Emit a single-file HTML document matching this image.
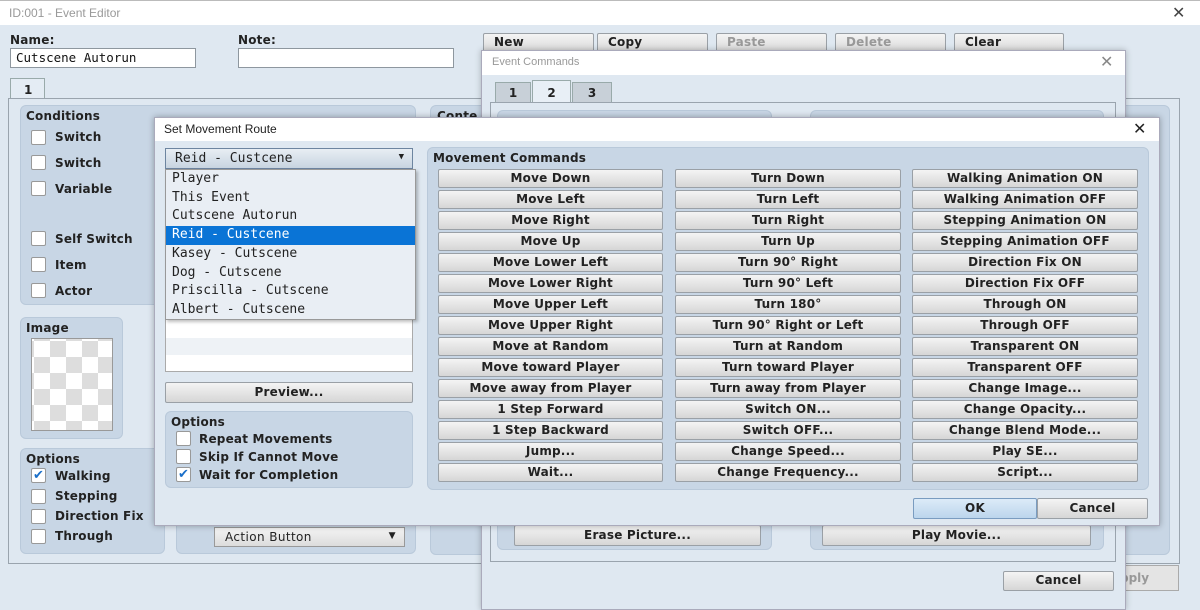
<!DOCTYPE html>
<html><head><meta charset="utf-8"><style>
*{box-sizing:border-box;margin:0;padding:0}
body{width:1200px;height:600px;overflow:hidden;position:relative;background:#dfe8f1;font-family:"DejaVu Sans","Liberation Sans",sans-serif;font-weight:bold;font-size:12px;color:#222}
.a{position:absolute}
.tb{background:#fff}
.ttl{font-family:"Liberation Sans",sans-serif;font-weight:normal;color:#999;font-size:12px}
.btn{position:absolute;background:linear-gradient(#f4f4f4,#d6d6d6);border:1px solid #9aa0a6;border-radius:2px;text-align:center;font-size:12px;line-height:17px;color:#222;letter-spacing:.2px}
.panel{position:absolute;background:#c8d6e5;border-radius:6px;border:1px solid #b9c9da}
.inp{position:absolute;background:#fff;border:1px solid #8e979f}
.cb{position:absolute;width:15px;height:15px;background:#fff;border:1px solid #999;border-radius:2px}
.lbl{position:absolute;font-size:12px;letter-spacing:.2px}
.mono{font-family:"DejaVu Sans Mono","Liberation Mono",monospace;font-weight:normal;font-size:12.5px}
.x{position:absolute;font-family:"Liberation Sans",sans-serif;font-weight:normal;font-size:16px;color:#444}
</style></head><body>
<!-- main window -->
<div class="a tb" style="left:0;top:0;width:1200px;height:25px;border-top:1px solid #bbb"></div>
<div class="a ttl" style="left:9px;top:6px">ID:001 - Event Editor</div>
<div class="x" style="left:1172px;top:3px">✕</div>
<div class="lbl" style="left:10px;top:33px">Name:</div>
<div class="lbl" style="left:238px;top:33px">Note:</div>
<div class="inp mono" style="left:10px;top:48px;width:186px;height:20px;padding:1px 5px;color:#111">Cutscene Autorun</div>
<div class="inp" style="left:238px;top:48px;width:216px;height:20px"></div>
<div class="btn" style="left:483px;top:33px;width:111px;height:22px;text-align:left;padding-left:10px">New</div>
<div class="btn" style="left:597px;top:33px;width:111px;height:22px;text-align:left;padding-left:10px">Copy</div>
<div class="btn" style="left:716px;top:33px;width:111px;height:22px;text-align:left;padding-left:10px;color:#999">Paste</div>
<div class="btn" style="left:835px;top:33px;width:111px;height:22px;text-align:left;padding-left:10px;color:#999">Delete</div>
<div class="btn" style="left:954px;top:33px;width:110px;height:22px;text-align:left;padding-left:10px">Clear</div>
<div class="a" style="left:10px;top:78px;width:35px;height:21px;background:#e4ecf4;border:1px solid #9aa;border-bottom:none;padding:4px 13px">1</div>
<div class="a" style="left:8px;top:98px;width:1172px;height:466px;border:1px solid #9aa4ae"></div>
<div class="panel" style="left:20px;top:105px;width:396px;height:200px"></div>
<div class="lbl" style="left:26px;top:109px">Conditions</div>
<div class="cb" style="left:31px;top:130px"></div><div class="lbl" style="left:55px;top:130px">Switch</div>
<div class="cb" style="left:31px;top:155px"></div><div class="lbl" style="left:55px;top:156px">Switch</div>
<div class="cb" style="left:31px;top:181px"></div><div class="lbl" style="left:55px;top:182px">Variable</div>
<div class="cb" style="left:31px;top:231px"></div><div class="lbl" style="left:55px;top:232px">Self Switch</div>
<div class="cb" style="left:31px;top:257px"></div><div class="lbl" style="left:55px;top:258px">Item</div>
<div class="cb" style="left:31px;top:283px"></div><div class="lbl" style="left:55px;top:284px">Actor</div>
<div class="panel" style="left:430px;top:105px;width:60px;height:450px"></div>
<div class="lbl" style="left:437px;top:109px">Conte</div>
<div class="panel" style="left:20px;top:317px;width:103px;height:122px"></div>
<div class="lbl" style="left:26px;top:321px">Image</div>
<div class="a" style="left:31px;top:338px;width:82px;height:93px;border:1px solid #999;background-color:#fff;background-image:linear-gradient(45deg,#ddd 25%,transparent 25%,transparent 75%,#ddd 75%),linear-gradient(45deg,#ddd 25%,transparent 25%,transparent 75%,#ddd 75%);background-size:32px 32px;background-position:2px 2px,18px 18px"></div>
<div class="panel" style="left:20px;top:448px;width:145px;height:106px"></div>
<div class="lbl" style="left:26px;top:452px">Options</div>
<div class="cb" style="left:31px;top:468px;color:#1a6fc9;font-size:13px;line-height:13px;text-align:center">✔</div><div class="lbl" style="left:55px;top:469px">Walking</div>
<div class="cb" style="left:31px;top:489px"></div><div class="lbl" style="left:55px;top:489px">Stepping</div>
<div class="cb" style="left:31px;top:509px"></div><div class="lbl" style="left:55px;top:509px">Direction Fix</div>
<div class="cb" style="left:31px;top:529px"></div><div class="lbl" style="left:55px;top:529px">Through</div>
<div class="panel" style="left:176px;top:450px;width:240px;height:104px"></div>
<div class="a" style="left:214px;top:527px;width:191px;height:20px;background:linear-gradient(#f4f4f4,#dcdcdc);border:1px solid #999;font-weight:normal;padding:2px 10px;letter-spacing:.4px">Action Button<span style="position:absolute;right:8px;top:3px;font-size:9px">▼</span></div>
<div class="panel" style="left:1120px;top:105px;width:50px;height:450px"></div>
<div class="a" style="left:1115px;top:565px;width:64px;height:26px;background:#e4e4e4;border:1px solid #aaa;color:#999;padding:5px 0 0 4px">pply</div>

<!-- event commands window -->
<div class="a" style="left:481px;top:50px;width:645px;height:560px;background:#dfe8f1;border:1px solid #aab;box-shadow:0 0 6px rgba(0,0,0,.25)"></div>
<div class="a tb" style="left:482px;top:51px;width:643px;height:24px"></div>
<div class="a ttl" style="left:492px;top:56px;font-size:11px">Event Commands</div>
<div class="x" style="left:1100px;top:52px;color:#888">✕</div>
<div class="a" style="left:495px;top:82px;width:36px;height:21px;background:#c8d0d8;border:1px solid #9aa;text-align:center;padding-top:3px">1</div>
<div class="a" style="left:532px;top:80px;width:39px;height:23px;background:#e8eff6;border:1px solid #9aa;border-bottom:none;text-align:center;padding-top:5px">2</div>
<div class="a" style="left:572px;top:82px;width:40px;height:21px;background:#c8d0d8;border:1px solid #9aa;text-align:center;padding-top:3px">3</div>
<div class="a" style="left:490px;top:102px;width:626px;height:460px;border:1px solid #9aa4ae"></div>
<div class="panel" style="left:497px;top:110px;width:275px;height:440px"></div>
<div class="panel" style="left:810px;top:110px;width:294px;height:440px"></div>
<div class="btn" style="left:514px;top:525px;width:247px;height:21px;line-height:19px">Erase Picture...</div>
<div class="btn" style="left:822px;top:525px;width:269px;height:21px;line-height:19px">Play Movie...</div>
<div class="btn" style="left:1003px;top:571px;width:111px;height:20px">Cancel</div>

<!-- set movement route -->
<div class="a" style="left:154px;top:117px;width:1006px;height:409px;background:#dfe8f1;border:1px solid #aab;box-shadow:0 0 6px rgba(0,0,0,.3)"></div>
<div class="a tb" style="left:155px;top:118px;width:1004px;height:23px"></div>
<div class="a" style="left:164px;top:122px;font-family:'Liberation Sans',sans-serif;font-weight:normal;font-size:12px;color:#222">Set Movement Route</div>
<div class="x" style="left:1133px;top:119px;color:#222">✕</div>
<div class="a mono" style="left:165px;top:148px;width:248px;height:21px;background:linear-gradient(#e8eef4,#c8d4e0);border:1px solid #6d85a0;padding:2px 9px;font-size:13px">Reid - Custcene<span style="position:absolute;right:8px;top:3px;font-size:9px">▼</span></div>
<div class="a" style="left:165px;top:169px;width:248px;height:203px;background:#fff;border:1px solid #aaa"></div>
<div class="a" style="left:166px;top:338px;width:246px;height:17px;background:#eef2f6"></div>
<div class="a mono" style="left:165px;top:169px;width:251px;height:151px;background:#e9eef4;border:1px solid #999;box-shadow:2px 2px 3px rgba(0,0,0,.25);line-height:18.7px;font-size:13px">
<div style="padding-left:6px">Player</div>
<div style="padding-left:6px">This Event</div>
<div style="padding-left:6px">Cutscene Autorun</div>
<div style="padding-left:6px;background:#0a74d6;color:#fff">Reid - Custcene</div>
<div style="padding-left:6px">Kasey - Cutscene</div>
<div style="padding-left:6px">Dog - Cutscene</div>
<div style="padding-left:6px">Priscilla - Cutscene</div>
<div style="padding-left:6px">Albert - Cutscene</div>
</div>
<div class="btn" style="left:165px;top:382px;width:248px;height:21px;line-height:19px">Preview...</div>
<div class="panel" style="left:165px;top:411px;width:248px;height:77px"></div>
<div class="lbl" style="left:171px;top:415px">Options</div>
<div class="cb" style="left:176px;top:431px"></div><div class="lbl" style="left:199px;top:432px">Repeat Movements</div>
<div class="cb" style="left:176px;top:449px"></div><div class="lbl" style="left:199px;top:450px">Skip If Cannot Move</div>
<div class="cb" style="left:176px;top:467px;color:#1a6fc9;font-size:13px;line-height:13px;text-align:center">✔</div><div class="lbl" style="left:199px;top:468px">Wait for Completion</div>
<div class="panel" style="left:427px;top:147px;width:722px;height:343px"></div>
<div class="lbl" style="left:433px;top:151px">Movement Commands</div>
<div class="btn" style="left:913px;top:498px;width:124px;height:21px;line-height:19px;background:linear-gradient(#dcebf8,#bcd5ec);border-color:#7a9cc0">OK</div>
<div class="btn" style="left:1037px;top:498px;width:111px;height:21px;line-height:19px">Cancel</div>

<div class="btn" style="left:438px;top:169px;width:225px;height:19px">Move Down</div>
<div class="btn" style="left:438px;top:190px;width:225px;height:19px">Move Left</div>
<div class="btn" style="left:438px;top:211px;width:225px;height:19px">Move Right</div>
<div class="btn" style="left:438px;top:232px;width:225px;height:19px">Move Up</div>
<div class="btn" style="left:438px;top:253px;width:225px;height:19px">Move Lower Left</div>
<div class="btn" style="left:438px;top:274px;width:225px;height:19px">Move Lower Right</div>
<div class="btn" style="left:438px;top:295px;width:225px;height:19px">Move Upper Left</div>
<div class="btn" style="left:438px;top:316px;width:225px;height:19px">Move Upper Right</div>
<div class="btn" style="left:438px;top:337px;width:225px;height:19px">Move at Random</div>
<div class="btn" style="left:438px;top:358px;width:225px;height:19px">Move toward Player</div>
<div class="btn" style="left:438px;top:379px;width:225px;height:19px">Move away from Player</div>
<div class="btn" style="left:438px;top:400px;width:225px;height:19px">1 Step Forward</div>
<div class="btn" style="left:438px;top:421px;width:225px;height:19px">1 Step Backward</div>
<div class="btn" style="left:438px;top:442px;width:225px;height:19px">Jump...</div>
<div class="btn" style="left:438px;top:463px;width:225px;height:19px">Wait...</div>

<div class="btn" style="left:675px;top:169px;width:226px;height:19px">Turn Down</div>
<div class="btn" style="left:675px;top:190px;width:226px;height:19px">Turn Left</div>
<div class="btn" style="left:675px;top:211px;width:226px;height:19px">Turn Right</div>
<div class="btn" style="left:675px;top:232px;width:226px;height:19px">Turn Up</div>
<div class="btn" style="left:675px;top:253px;width:226px;height:19px">Turn 90° Right</div>
<div class="btn" style="left:675px;top:274px;width:226px;height:19px">Turn 90° Left</div>
<div class="btn" style="left:675px;top:295px;width:226px;height:19px">Turn 180°</div>
<div class="btn" style="left:675px;top:316px;width:226px;height:19px">Turn 90° Right or Left</div>
<div class="btn" style="left:675px;top:337px;width:226px;height:19px">Turn at Random</div>
<div class="btn" style="left:675px;top:358px;width:226px;height:19px">Turn toward Player</div>
<div class="btn" style="left:675px;top:379px;width:226px;height:19px">Turn away from Player</div>
<div class="btn" style="left:675px;top:400px;width:226px;height:19px">Switch ON...</div>
<div class="btn" style="left:675px;top:421px;width:226px;height:19px">Switch OFF...</div>
<div class="btn" style="left:675px;top:442px;width:226px;height:19px">Change Speed...</div>
<div class="btn" style="left:675px;top:463px;width:226px;height:19px">Change Frequency...</div>

<div class="btn" style="left:912px;top:169px;width:226px;height:19px">Walking Animation ON</div>
<div class="btn" style="left:912px;top:190px;width:226px;height:19px">Walking Animation OFF</div>
<div class="btn" style="left:912px;top:211px;width:226px;height:19px">Stepping Animation ON</div>
<div class="btn" style="left:912px;top:232px;width:226px;height:19px">Stepping Animation OFF</div>
<div class="btn" style="left:912px;top:253px;width:226px;height:19px">Direction Fix ON</div>
<div class="btn" style="left:912px;top:274px;width:226px;height:19px">Direction Fix OFF</div>
<div class="btn" style="left:912px;top:295px;width:226px;height:19px">Through ON</div>
<div class="btn" style="left:912px;top:316px;width:226px;height:19px">Through OFF</div>
<div class="btn" style="left:912px;top:337px;width:226px;height:19px">Transparent ON</div>
<div class="btn" style="left:912px;top:358px;width:226px;height:19px">Transparent OFF</div>
<div class="btn" style="left:912px;top:379px;width:226px;height:19px">Change Image...</div>
<div class="btn" style="left:912px;top:400px;width:226px;height:19px">Change Opacity...</div>
<div class="btn" style="left:912px;top:421px;width:226px;height:19px">Change Blend Mode...</div>
<div class="btn" style="left:912px;top:442px;width:226px;height:19px">Play SE...</div>
<div class="btn" style="left:912px;top:463px;width:226px;height:19px">Script...</div>
</body></html>
